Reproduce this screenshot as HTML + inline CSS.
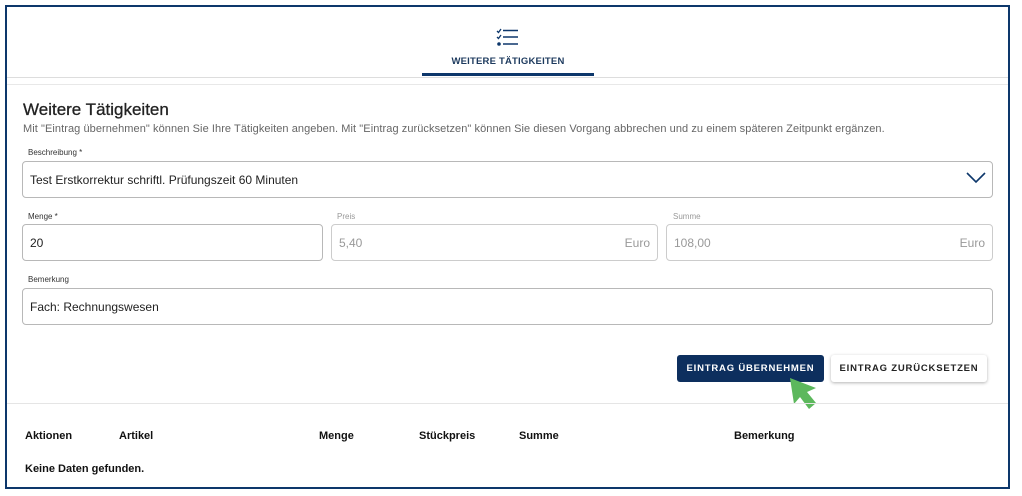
<!DOCTYPE html>
<html><head><meta charset="utf-8"><style>
*{box-sizing:border-box;margin:0;padding:0}
body{width:1022px;height:496px;background:#fff;font-family:"Liberation Sans",sans-serif;position:relative;overflow:hidden;color:#222}
.frame{position:absolute;left:5px;top:5px;width:1005px;height:484px;border:2px solid #0d376b;}
.abs{position:absolute}
.lbl{position:absolute;font-size:8px;color:#333}
.box{position:absolute;border:1px solid #b8b8b8;border-radius:4px;height:37px;font-size:12px;padding:0 7px;line-height:36px;background:#fff}
.dis{color:#999;border-color:#ccc}
.th{position:absolute;top:430px;font-size:11px;font-weight:bold;color:#111}
</style></head><body>
<div class="frame"></div>
<svg class="abs" style="left:496px;top:28px" width="24" height="20" viewBox="0 0 24 20">
<path d="M1 3l1.5 1.5L5 1M1 9l1.5 1.5L5 7" stroke="#0d376b" stroke-width="1.3" fill="none"/>
<circle cx="3" cy="16" r="1.8" fill="#0d376b"/>
<path d="M7 2.5h15M7 9h15M7 16h15" stroke="#0d376b" stroke-width="1.6"/>
</svg>
<div class="abs" style="left:422px;top:56px;width:172px;text-align:center;font-size:9.5px;font-weight:bold;color:#1d3a5e;letter-spacing:0.2px">WEITERE TÄTIGKEITEN</div>
<div class="abs" style="left:422px;top:73px;width:172px;height:3px;background:#0d376b"></div>
<div class="abs" style="left:7px;top:77px;width:1001px;height:1px;background:#ddd"></div>
<div class="abs" style="left:7px;top:84px;width:1001px;height:1px;background:#e8e8e8"></div>
<div class="abs" style="left:23px;top:100px;font-size:17px;color:#222;-webkit-text-stroke:0.3px #222">Weitere Tätigkeiten</div>
<div class="abs" style="left:23px;top:123px;font-size:11px;color:#666;letter-spacing:0.07px">Mit "Eintrag übernehmen" können Sie Ihre Tätigkeiten angeben. Mit "Eintrag zurücksetzen" können Sie diesen Vorgang abbrechen und zu einem späteren Zeitpunkt ergänzen.</div>
<div class="lbl" style="left:28px;top:148px">Beschreibung *</div>
<div class="box" style="left:22px;top:161px;width:971px">Test Erstkorrektur schriftl. Prüfungszeit 60 Minuten</div>
<svg class="abs" style="left:966px;top:172px" width="20" height="12"><path d="M1 1l9 9 9-9" stroke="#0d376b" stroke-width="1.6" fill="none"/></svg>
<div class="lbl" style="left:28px;top:212px">Menge *</div>
<div class="box" style="left:22px;top:224px;width:301px">20</div>
<div class="lbl" style="left:337px;top:212px;color:#999">Preis</div>
<div class="box dis" style="left:331px;top:224px;width:327px">5,40<span style="float:right">Euro</span></div>
<div class="lbl" style="left:673px;top:212px;color:#999">Summe</div>
<div class="box dis" style="left:666px;top:224px;width:327px">108,00<span style="float:right">Euro</span></div>
<div class="lbl" style="left:28px;top:275px">Bemerkung</div>
<div class="box" style="left:22px;top:288px;width:971px">Fach: Rechnungswesen</div>
<div class="abs" style="left:677px;top:355px;width:147px;height:27px;background:#0d2f5e;border-radius:3px;color:#fff;font-size:9.5px;font-weight:bold;letter-spacing:0.8px;text-align:center;line-height:27px">EINTRAG ÜBERNEHMEN</div>
<div class="abs" style="left:831px;top:355px;width:156px;height:27px;background:#fff;border-radius:3px;box-shadow:0 1px 3px rgba(0,0,0,.3);color:#222;font-size:9.5px;font-weight:bold;letter-spacing:0.8px;text-align:center;line-height:27px">EINTRAG ZURÜCKSETZEN</div>
<svg class="abs" style="left:786px;top:376px" width="38" height="38" viewBox="0 0 38 38"><path d="M4 2L8 28l6-7 9 12 7-6-9-11 9-4z" fill="#5cb85c"/></svg>
<div class="abs" style="left:7px;top:403px;width:1001px;height:1px;background:#e5e5e5"></div>
<div class="th" style="left:25px">Aktionen</div>
<div class="th" style="left:119px">Artikel</div>
<div class="th" style="left:319px">Menge</div>
<div class="th" style="left:419px">Stückpreis</div>
<div class="th" style="left:519px">Summe</div>
<div class="th" style="left:734px">Bemerkung</div>
<div class="th" style="left:25px;top:463px">Keine Daten gefunden.</div>
</body></html>
